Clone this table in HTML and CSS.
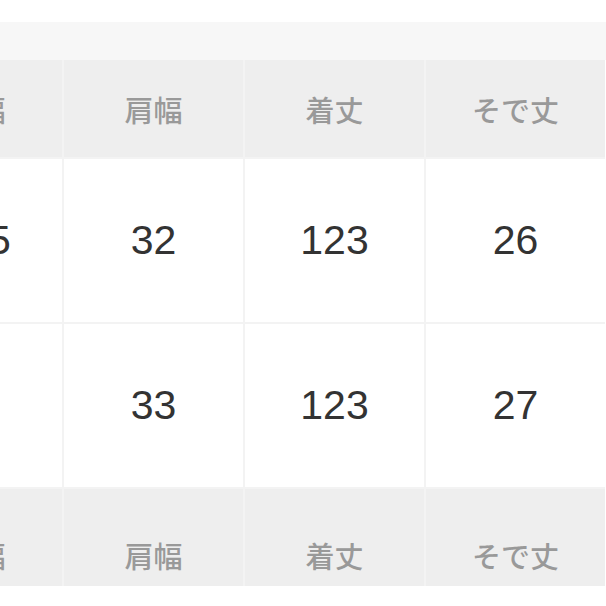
FILE: index.html
```html
<!DOCTYPE html>
<html lang="ja">
<head>
<meta charset="utf-8">
<title>サイズ表</title>
<link rel="stylesheet" href="styles.css">
</head>
<body>
<div class="page">
  <div class="band"></div>
  <div class="table">
    <div class="cell head first">身幅</div>
    <div class="cell head">肩幅</div>
    <div class="cell head">着丈</div>
    <div class="cell head">そで丈</div>

    <div class="cell data first">125</div>
    <div class="cell data">32</div>
    <div class="cell data">123</div>
    <div class="cell data">26</div>

    <div class="cell data first"><span class="hidden">44</span></div>
    <div class="cell data">33</div>
    <div class="cell data">123</div>
    <div class="cell data">27</div>

    <div class="cell head foot first">身幅</div>
    <div class="cell head foot">肩幅</div>
    <div class="cell head foot">着丈</div>
    <div class="cell head foot">そで丈</div>
  </div>
</div>
</body>
</html>
```

FILE: styles.css
```css
html, body {
  margin: 0;
  padding: 0;
  background: #ffffff;
  overflow: hidden;
}

.page {
  width: 606px;
  height: 606px;
  padding-top: 22px;
  box-sizing: border-box;
  overflow: hidden;
}

.band {
  height: 38px;
  background: #f7f7f7;
}

.table {
  display: grid;
  grid-template-columns: 179px 179px 179px 179px;
  grid-template-rows: 97px 163px 163px 97px;
  gap: 2px;
  margin-left: -117px;
  width: 722px;
  background: #f3f3f3;
}

.cell {
  display: flex;
  align-items: center;
  justify-content: center;
  box-sizing: border-box;
}

.head {
  background: #eeeeee;
  color: #999999;
  font-family: "Noto Sans CJK JP", "Noto Sans", sans-serif;
  font-size: 29px;
  font-weight: 500;
  padding-top: 1px;
}

.foot {
  align-items: flex-start;
  padding-top: 45px;
}

.data {
  background: #ffffff;
  color: #333333;
  font-family: "Liberation Sans", Arial, sans-serif;
  font-size: 41px;
}

.first {
  padding-left: 8px;
}

.hidden {
  visibility: hidden;
}
```
